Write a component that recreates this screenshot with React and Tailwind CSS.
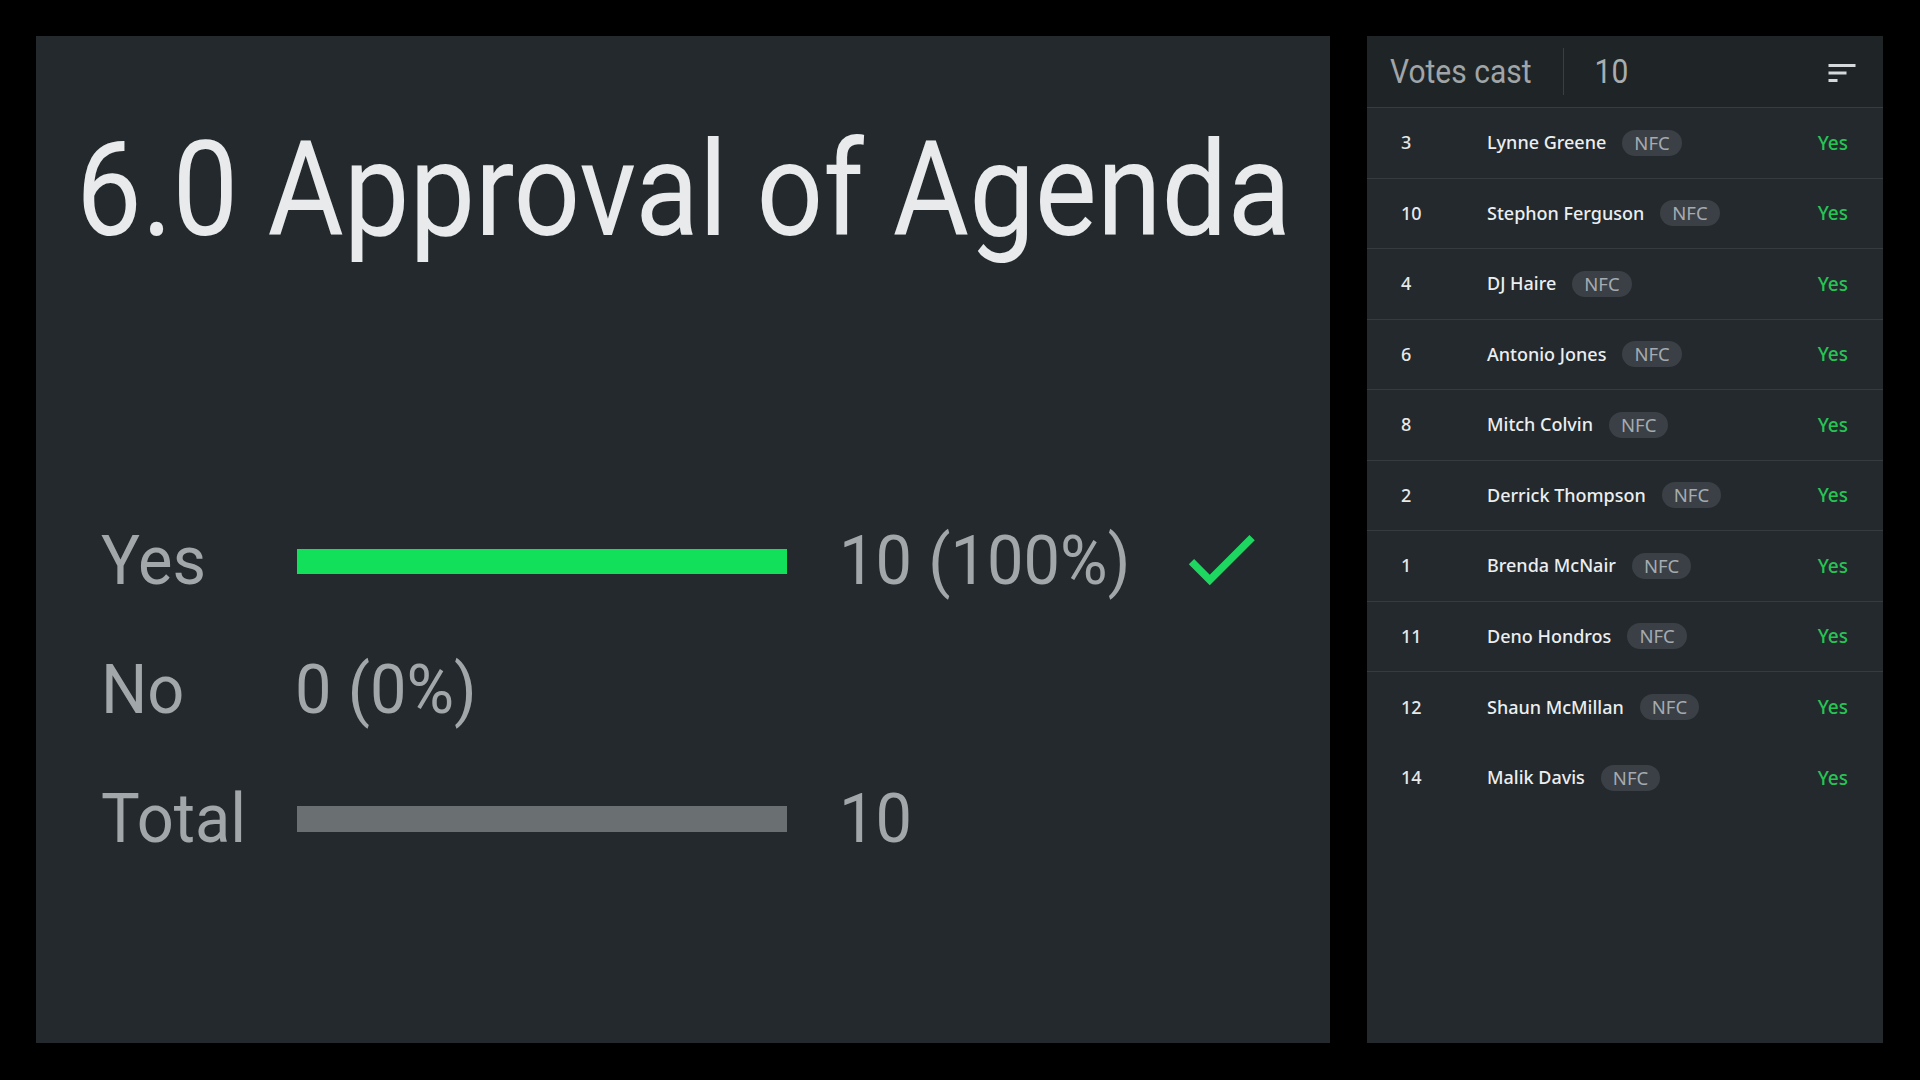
const voters = [
  { seat: 3, name: "Lynne Greene" },
  { seat: 10, name: "Stephon Ferguson" },
  { seat: 4, name: "DJ Haire" },
  { seat: 6, name: "Antonio Jones" },
  { seat: 8, name: "Mitch Colvin" },
  { seat: 2, name: "Derrick Thompson" },
  { seat: 1, name: "Brenda McNair" },
  { seat: 11, name: "Deno Hondros" },
  { seat: 12, name: "Shaun McMillan" },
  { seat: 14, name: "Malik Davis" },
];

function SortIcon() {
  return (
    <svg width="36" height="36" viewBox="0 0 24 24" fill="#d6d9db">
      <path d="M3 18h6v-2H3v2zM3 6v2h18V6H3zm0 7h12v-2H3v2z" />
    </svg>
  );
}

function CheckIcon() {
  return (
    <svg width="90" height="90" viewBox="0 0 24 24" fill="#1ed760">
      <path d="M9 16.17L4.83 12l-1.42 1.41L9 19 21 7l-1.41-1.41z" />
    </svg>
  );
}

function Stretch({ children, className = "scale-y-[1.1]" }) {
  return <span className={"inline-block " + className}>{children}</span>;
}

function ResultRow({ label, children }) {
  return (
    <div className="flex items-center h-[70px]">
      <div className="w-[196px] text-[65px] leading-none text-[#a2a7aa]">
        <Stretch className="scale-y-[1.06]">{label}</Stretch>
      </div>
      {children}
    </div>
  );
}

export default function App() {
  return (
    <div
      className="w-full h-[1080px] bg-black flex gap-[37px] pt-[36px] pl-[36px]"
      style={{ fontFamily: "Roboto, 'Liberation Sans', sans-serif" }}
    >
      {/* left: motion + result */}
      <div className="w-[1294px] h-[1007px] bg-[#23292d] pl-[40px] pt-[96px]">
        <h1 className="text-[117px] leading-none font-normal text-[#e8eaec] whitespace-nowrap">
          <Stretch className="scale-y-[1.12]">6.0 Approval of Agenda</Stretch>
        </h1>

        <div className="mt-[277px] pl-[25px] flex flex-col gap-[59px]">
          <ResultRow label="Yes">
            <div className="w-[490px] h-[25px] bg-[#12e05a]" />
            <div className="ml-[52px] w-[340px] text-[65px] leading-none text-[#a2a7aa]">
              <Stretch className="scale-y-[1.06]">10 (100%)</Stretch>
            </div>
            <div className="-ml-[3px] -mt-[4px]">
              <CheckIcon />
            </div>
          </ResultRow>

          <ResultRow label="No">
            <div className="-ml-[2px] text-[65px] leading-none text-[#a2a7aa]">
              <Stretch className="scale-y-[1.06]">0 (0%)</Stretch>
            </div>
          </ResultRow>

          <ResultRow label="Total">
            <div className="w-[490px] h-[26px] bg-[#6a6f71]" />
            <div className="ml-[52px] text-[65px] leading-none text-[#a2a7aa]">
              <Stretch className="scale-y-[1.06]">10</Stretch>
            </div>
          </ResultRow>
        </div>
      </div>

      {/* right: votes list */}
      <div className="w-[516px] h-[1007px] bg-[#23292d] flex flex-col">
        <div className="h-[72px] bg-[#1f2427] border-b border-[#363c40] flex items-center pl-[23px] pr-[23px]">
          <span className="text-[30px] leading-none text-[#a0a5a8]">
            <Stretch>Votes cast</Stretch>
          </span>
          <div className="w-px h-[47px] bg-[#393f43] mx-[31px]" />
          <span className="text-[30px] leading-none text-[#a8adb0]">
            <Stretch>10</Stretch>
          </span>
          <div className="ml-auto mt-[2px]">
            <SortIcon />
          </div>
        </div>

        <div
          className="flex flex-col"
          style={{ fontFamily: "'Noto Sans', 'Open Sans', sans-serif" }}
        >
          {voters.map((v, i) => (
            <div
              key={v.seat}
              className={
                "h-[70.5px] flex items-center pl-[34px] pr-[35px] text-[18px] " +
                (i < 8 ? "border-b border-[#353b3f]" : "")
              }
            >
              <span className="w-[86px] font-medium text-[#e6e8ea]">{v.seat}</span>
              <span className="font-medium text-[#eceef0]">{v.name}</span>
              <span className="ml-[16px] h-[26px] px-[12px] rounded-full bg-[#3a4045] text-[#a5abb0] text-[18.5px] flex items-center">
                NFC
              </span>
              <span className="ml-auto font-medium text-[19px] text-[#26c455]">Yes</span>
            </div>
          ))}
        </div>
      </div>
    </div>
  );
}
